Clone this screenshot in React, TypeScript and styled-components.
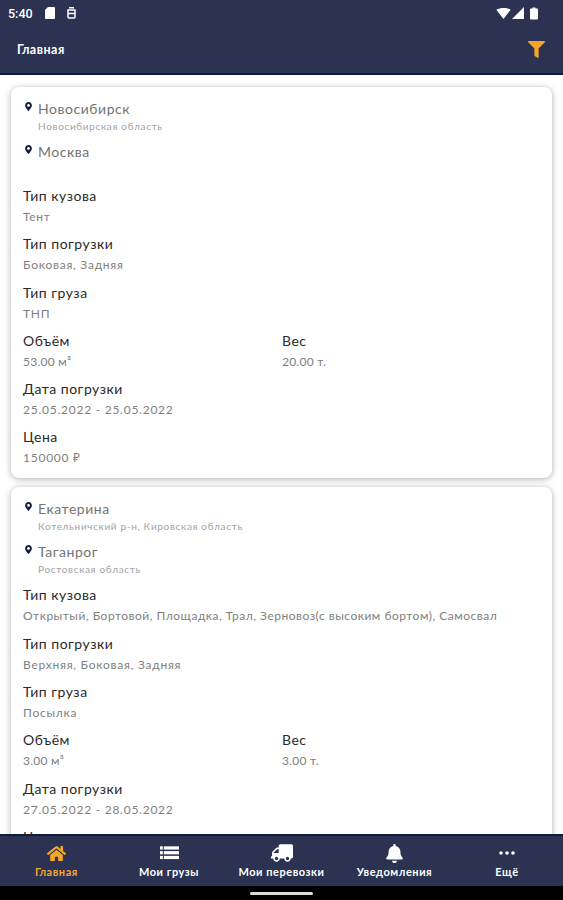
import React from "react";
import styled, { createGlobalStyle } from "styled-components";
import { FaHome, FaTruck, FaBell, FaFilter, FaMapMarkerAlt } from "react-icons/fa";

const Global = createGlobalStyle`
  html, body { margin: 0; padding: 0; background: #fff; }
  body { font-family: "Lato", "Noto Sans", sans-serif; }
`;

const Screen = styled.div`
  width: 563px;
  height: 900px;
  display: flex;
  flex-direction: column;
  overflow: hidden;
  background: #fff;
`;

const Top = styled.div`
  height: 75px;
  flex: none;
  box-sizing: border-box;
  background: #2b3252;
  border-bottom: 2px solid #0f1a40;
  padding: 0 18px 0 8px;
  color: #fff;
`;

const Status = styled.div`
  height: 26px;
  display: flex;
  align-items: center;
  gap: 12px;
  font-family: "Roboto", sans-serif;
  font-size: 12.5px;
  font-weight: 500;
  padding-right: 7px;
`;

const StatusRight = styled.div`
  margin-left: auto;
  display: flex;
  align-items: center;
  gap: 1px;
`;

const TitleRow = styled.div`
  height: 47px;
  display: flex;
  align-items: center;
  justify-content: space-between;
  padding-left: 9px;
  font-size: 12.5px;
  font-weight: 700;
  letter-spacing: 0.5px;
`;

const List = styled.div`
  flex: 1;
  min-height: 0;
  overflow: hidden;
  padding: 12px 11px 0;
  display: flex;
  flex-direction: column;
  gap: 9px;
`;

const Card = styled.div`
  flex: none;
  background: #fff;
  border-radius: 8px;
  box-shadow: 0 1px 6px rgba(0, 0, 0, 0.32);
  padding: 12px 12px 10px;
`;

const Place = styled.div`
  display: grid;
  grid-template-columns: 15px 1fr;
  margin-bottom: 6px;
  min-height: 37px;
`;

const Pin = styled.div`
  padding: 3px 0 0 1px;
  color: #171d3b;
  font-size: 9px;
  line-height: 1;
`;

const City = styled.div`
  font-size: 14px;
  line-height: 20px;
  color: #737373;
  letter-spacing: 0.55px;
`;

const Region = styled.div`
  font-size: 10px;
  line-height: 15px;
  color: #a3a3a3;
  letter-spacing: 0.67px;
`;

const Fields = styled.div<{ $top: number }>`
  margin-top: ${(p) => p.$top}px;
  display: flex;
  flex-direction: column;
  gap: 7.3px;
`;

const Two = styled.div`
  display: grid;
  grid-template-columns: 259px 1fr;
`;

const Label = styled.div`
  font-size: 14px;
  line-height: 20px;
  color: #2a2a2a;
  letter-spacing: 0.5px;
`;

const Value = styled.div<{ $spacing: number }>`
  font-size: 12px;
  line-height: 21px;
  color: #808080;
  letter-spacing: ${(p) => p.$spacing}px;
`;

const Nav = styled.div`
  flex: none;
  height: 52px;
  box-sizing: border-box;
  background: #2b3252;
  border-top: 2px solid #0f1a40;
  display: grid;
  grid-template-columns: 113px 112px 113px 113px 112px;
`;

const NavItem = styled.div<{ $active?: boolean }>`
  display: flex;
  flex-direction: column;
  align-items: center;
  padding-top: 6px;
  color: ${(p) => (p.$active ? "#f5a52c" : "#fff")};
  font-size: 11px;
  font-weight: 700;
  letter-spacing: 0.55px;
`;

const NavIcon = styled.div`
  height: 22px;
  display: flex;
  align-items: center;
  justify-content: center;
`;

const NavText = styled.div`
  margin-top: 1px;
  line-height: 14px;
  white-space: nowrap;
`;

const Gesture = styled.div`
  flex: none;
  height: 14px;
  background: #000;
  display: flex;
  align-items: center;
  justify-content: center;
`;

const Handle = styled.div`
  width: 63px;
  height: 3px;
  margin-top: 1px;
  border-radius: 2px;
  background: #ddd;
`;

type PlaceData = { city: string; region?: string };
type CardData = {
  places: PlaceData[];
  top: number;
  body: string;
  bodySpacing: number;
  load: string;
  cargo: string;
  volume: string;
  weight: string;
  date: string;
  price: string;
};

const cards: CardData[] = [
  {
    places: [{ city: "Новосибирск", region: "Новосибирская область" }, { city: "Москва" }],
    top: 7,
    body: "Тент",
    bodySpacing: 0.7,
    load: "Боковая, Задняя",
    cargo: "ТНП",
    volume: "53.00 м³",
    weight: "20.00 т.",
    date: "25.05.2022 - 25.05.2022",
    price: "150000 ₽",
  },
  {
    places: [
      { city: "Екатерина", region: "Котельничский р-н, Кировская область" },
      { city: "Таганрог", region: "Ростовская область" },
    ],
    top: 1,
    body: "Открытый, Бортовой, Площадка, Трал, Зерновоз(с высоким бортом), Самосвал",
    bodySpacing: 0.5,
    load: "Верхняя, Боковая, Задняя",
    cargo: "Посылка",
    volume: "3.00 м³",
    weight: "3.00 т.",
    date: "27.05.2022 - 28.05.2022",
    price: "",
  },
];

const Field = ({ label, value, spacing = 0.75 }: { label: string; value: string; spacing?: number }) => (
  <div>
    <Label>{label}</Label>
    <Value $spacing={spacing}>{value}</Value>
  </div>
);

const ListIcon = () => (
  <svg width="19" height="14" viewBox="0 0 20 14" fill="currentColor">
    <rect x="0" y="0" width="3" height="3.4" />
    <rect x="4" y="0" width="16" height="3.4" />
    <rect x="0" y="5" width="3" height="3.4" />
    <rect x="4" y="5" width="16" height="3.4" />
    <rect x="0" y="10" width="3" height="3.4" />
    <rect x="4" y="10" width="16" height="3.4" />
  </svg>
);

const DotsIcon = () => (
  <svg width="16" height="4" viewBox="0 0 16 4" fill="currentColor">
    <circle cx="2" cy="2" r="1.8" />
    <circle cx="8" cy="2" r="1.8" />
    <circle cx="14" cy="2" r="1.8" />
  </svg>
);

const App = () => (
  <Screen>
    <Global />
    <Top>
      <Status>
        <span>5:40</span>
        <svg width="10" height="12" viewBox="0 0 10 12" fill="#fff">
          <path d="M3 0h6a1 1 0 0 1 1 1v10a1 1 0 0 1-1 1H1a1 1 0 0 1-1-1V3z" />
        </svg>
        <svg width="9" height="12" viewBox="0 0 9 12" fill="none" stroke="#fff" strokeWidth="1.5">
          <path d="M2 .8h5M1 3h7v7a1 1 0 0 1-1 1H2a1 1 0 0 1-1-1zM1 6.5h7" />
        </svg>
        <StatusRight>
          <svg width="15" height="11" viewBox="0 0 13 10" fill="#fff">
            <path d="M0 1.500C3.800-.5 9.200-.5 13 1.500L6.500 10z" />
          </svg>
          <svg width="12" height="12" viewBox="0 0 11 11" fill="#fff">
            <path d="M11 0v11H0z" />
          </svg>
          <svg width="8" height="13" viewBox="0 0 8 12" fill="#fff" style={{ marginLeft: 5 }}>
            <path d="M2.500 0h3v1H7a1 1 0 0 1 1 1v9a1 1 0 0 1-1 1H1a1 1 0 0 1-1-1V2a1 1 0 0 1 1-1h1.500z" />
          </svg>
        </StatusRight>
      </Status>
      <TitleRow>
        <span>Главная</span>
        <FaFilter size={17} color="#f5a52c" />
      </TitleRow>
    </Top>
    <List>
      {cards.map((c) => (
        <Card key={c.body}>
          {c.places.map((p) => (
            <Place key={p.city}>
              <Pin>
                <FaMapMarkerAlt />
              </Pin>
              <div>
                <City>{p.city}</City>
                {p.region && <Region>{p.region}</Region>}
              </div>
            </Place>
          ))}
          <Fields $top={c.top}>
            <Field label="Тип кузова" value={c.body} spacing={c.bodySpacing} />
            <Field label="Тип погрузки" value={c.load} />
            <Field label="Тип груза" value={c.cargo} />
            <Two>
              <Field label="Объём" value={c.volume} spacing={0.25} />
              <Field label="Вес" value={c.weight} spacing={0.25} />
            </Two>
            <Field label="Дата погрузки" value={c.date} />
            <Field label="Цена" value={c.price} />
          </Fields>
        </Card>
      ))}
    </List>
    <Nav>
      <NavItem $active>
        <NavIcon><FaHome size={19} /></NavIcon>
        <NavText>Главная</NavText>
      </NavItem>
      <NavItem>
        <NavIcon><ListIcon /></NavIcon>
        <NavText>Мои грузы</NavText>
      </NavItem>
      <NavItem>
        <NavIcon><FaTruck size={22} style={{ transform: "scaleX(-1)" }} /></NavIcon>
        <NavText>Мои перевозки</NavText>
      </NavItem>
      <NavItem>
        <NavIcon><FaBell size={19} /></NavIcon>
        <NavText>Уведомления</NavText>
      </NavItem>
      <NavItem>
        <NavIcon><DotsIcon /></NavIcon>
        <NavText>Ещё</NavText>
      </NavItem>
    </Nav>
    <Gesture>
      <Handle />
    </Gesture>
  </Screen>
);

export default App;
